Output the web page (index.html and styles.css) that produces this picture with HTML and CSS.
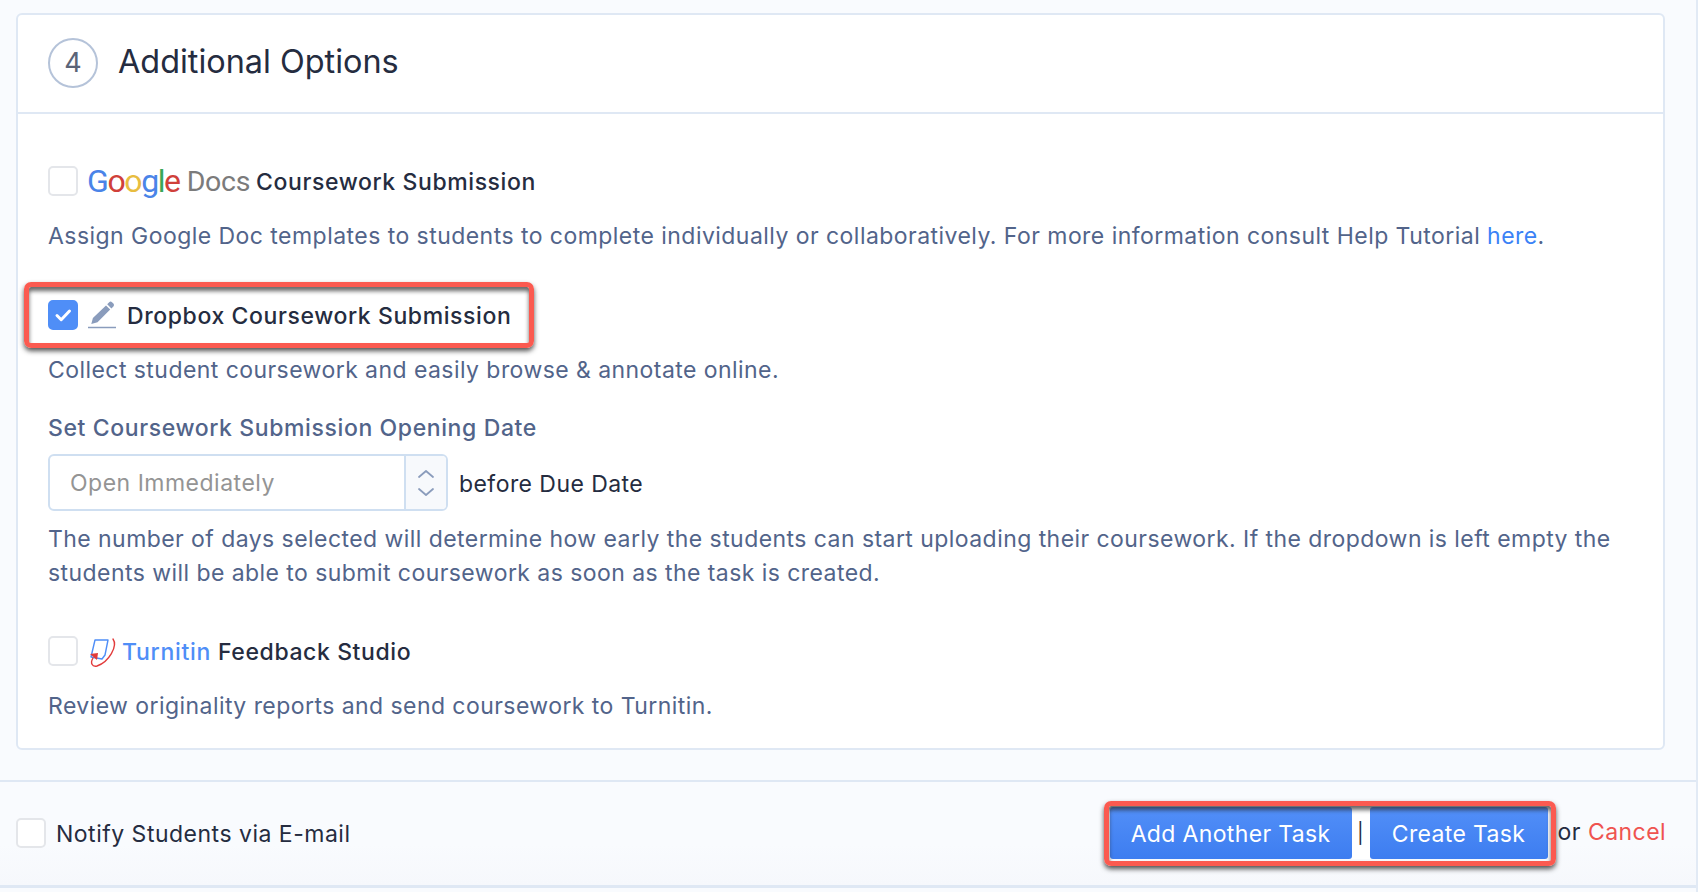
FILE: index.html
```html
<!DOCTYPE html>
<html lang="en">
<head>
<meta charset="utf-8">
<title>Additional Options</title>
<link rel="stylesheet" href="styles.css">
</head>
<body>
<main class="page">
  <section class="card">
    <header class="card-head">
      <span class="step">4</span>
      <h2 class="card-title">Additional Options</h2>
    </header>
    <div class="card-body">
      <div class="option option-google">
        <span class="check"></span>
        <span class="google"><span class="g-blue">G</span><span class="g-red">o</span><span class="g-yellow">o</span><span class="g-blue">g</span><span class="g-green">l</span><span class="g-red">e</span></span>
        <span class="docs">Docs</span>
        <span class="option-name">Coursework Submission</span>
      </div>
      <p class="desc desc-google">Assign Google Doc templates to students to complete individually or collaboratively. For more information consult Help Tutorial <a class="link">here</a>.</p>

      <div class="option option-dropbox">
        <span class="check check-on">
          <svg viewBox="0 0 30 30" width="30" height="30"><path d="M9 15.500l4.200 4.200L21.500 11" fill="none" stroke="#fff" stroke-width="3" stroke-linecap="round" stroke-linejoin="round"/></svg>
        </span>
        <svg class="pencil" viewBox="0 0 28 30" width="28" height="30"><path d="M21.200 2.200c.8-.8 2-.8 2.800 0l1.400 1.400c.8.8.8 2 0 2.800l-2 2-4.200-4.200zM18 5.400l4.200 4.200L9.500 22.300l-6.200 1.600 1.600-6z" fill="#8a9cbc"/><path d="M0 27.500h28" stroke="#8a9cbc" stroke-width="1.500"/></svg>
        <span class="option-name">Dropbox Coursework Submission</span>
      </div>
      <p class="desc desc-dropbox">Collect student coursework and easily browse &amp; annotate online.</p>
      <label class="field-label">Set Coursework Submission Opening Date</label>
      <div class="select-row">
        <div class="select">
          <span class="select-value">Open Immediately</span>
          <span class="spinner">
            <svg viewBox="0 0 18 30" width="18" height="30"><path d="M2 9l7-6 7 6M2 21l7 6 7-6" fill="none" stroke="#8a9cbc" stroke-width="1.800" stroke-linecap="round" stroke-linejoin="round"/></svg>
          </span>
        </div>
        <span class="select-after">before Due Date</span>
      </div>
      <p class="desc desc-help">The number of days selected will determine how early the students can start uploading their coursework. If the dropdown is left empty the students will be able to submit coursework as soon as the task is created.</p>

      <div class="option option-turnitin">
        <span class="check"></span>
        <svg class="turnitin-logo" viewBox="0 0 28 30" width="28" height="30"><path d="M6 4h13l-3 15-3 4-11-2z" fill="#fff" stroke="#4f8ef7" stroke-width="1.400" stroke-linejoin="round"/><path d="M24 3C29 10 20 26 8 30 3 31 1 27 4 22" fill="none" stroke="#e23b3b" stroke-width="1.400" stroke-linecap="round"/><path d="M1 18l8-1-1 7z" fill="#e23b3b"/></svg>
        <span class="turnitin-word">Turnitin</span>
        <span class="option-name">Feedback Studio</span>
      </div>
      <p class="desc desc-turnitin">Review originality reports and send coursework to Turnitin.</p>
    </div>
  </section>

  <footer class="footer">
    <div class="notify">
      <span class="check"></span>
      <span class="notify-text">Notify Students via E-mail</span>
    </div>
    <div class="actions">
      <div class="btn-group">
        <button class="btn btn-add">Add Another Task</button>
        <span class="btn-sep">|</span>
        <button class="btn btn-create">Create Task</button>
      </div>
      <span class="or">or</span>
      <a class="cancel">Cancel</a>
    </div>
  </footer>
</main>
</body>
</html>
```

FILE: styles.css
```css
*, *::before, *::after { box-sizing: border-box; }
html, body { margin: 0; height: 892px; overflow: hidden; }
body {
  background: #eef3f9;
  font-family: Inter, "Noto Sans", sans-serif;
  color: #252c40;
  font-size: 23px;
  letter-spacing: 0.44px;
}
.page {
  height: 892px;
  display: flex;
  flex-direction: column;
  padding-top: 13px;
  background: #f9fbfe;
  border-right: 2px solid #e2eaf5;
}

.card {
  margin: 0 31px 0 16px;
  height: 737px;
  background: #fff;
  border: 2px solid #dfe8f4;
  border-radius: 6px;
  flex: none;
}
.card-head {
  height: 99px;
  border-bottom: 2px solid #dfe8f4;
  display: flex;
  align-items: center;
  padding-left: 30px;
  gap: 20px;
}
.step {
  width: 50px; height: 50px;
  border: 2px solid #b5c3d9;
  border-radius: 50%;
  display: flex; align-items: center; justify-content: center;
  font-size: 27px;
  letter-spacing: 0;
  color: #5b6478;
  margin-bottom: 2px;
}
.card-title { margin: 0 0 4px; font-size: 32.4px; font-weight: 400; letter-spacing: 0; color: #252c40; }

.card-body { padding: 0 30px; }
.option { display: flex; align-items: center; height: 30px; position: relative; }
.option-google { margin-top: 52px; }
.option-name { font-weight: 500; letter-spacing: 0.6px; padding-top: 1px; }
.check {
  width: 30px; height: 30px; flex: none;
  background: #fff;
  border: 2px solid #e4e6ea;
  border-radius: 5px;
  display: block;
}
.check-on { background: #4f8ef7; border-color: #4f8ef7; }
.check-on svg { display: block; margin: -2px; }
.google { margin-left: 9px; font-family: Roboto, sans-serif; font-size: 32px; letter-spacing: -1.4px; }
.g-blue { color: #4a84e8; }
.g-red { color: #d0403a; }
.g-yellow { color: #e8bd3f; }
.g-green { color: #3aa757; }
.docs { margin-left: 7px; margin-right: 6px; font-family: Roboto, sans-serif; font-size: 28.5px; letter-spacing: -0.3px; color: #7b7b7b; }

.desc { margin: 0; color: #52648a; line-height: 34px; }
.desc-google { margin-top: 23px; letter-spacing: 0.455px; }
.link { color: #3b82f6; }

.option-dropbox { margin-top: 47px; }
.option-dropbox::after {
  content: "";
  position: absolute;
  left: -24px; top: -18px;
  width: 510px; height: 66px;
  border: 5px solid #fb5a50;
  border-radius: 7px;
  box-shadow: 0 3px 5px rgba(40,40,40,.8), inset 0 4px 4px rgba(40,40,40,.7);
}
.pencil { margin-left: 10px; margin-right: 11px; flex: none; }
.desc-dropbox { margin-top: 23px; }

.field-label { display: block; margin-top: 24px; line-height: 34px; font-weight: 500; letter-spacing: 0.61px; color: #52648a; }
.select-row { display: flex; align-items: center; margin-top: 9px; }
.select {
  width: 400px; height: 57px;
  display: flex;
  background: #fff;
  border: 2px solid #cfdff1;
  border-radius: 6px;
}
.select-value { flex: 1; padding: 1px 0 0 20px; align-self: center; color: #949494; letter-spacing: 0.5px; }
.spinner {
  width: 42px;
  border-left: 2px solid #cfdff1;
  background: #f7f9fc;
  display: flex; align-items: center; justify-content: center;
  border-radius: 0 4px 4px 0;
}
.select-after { margin-left: 11px; padding-top: 2px; color: #252c40; }
.desc-help { margin-top: 11px; }

.option-turnitin { margin-top: 46px; }
.turnitin-logo { margin-left: 11px; margin-right: 5px; flex: none; overflow: visible; }
.turnitin-word { color: #4f8ef7; font-weight: 500; margin-right: 7px; padding-top: 1px; letter-spacing: 0.7px; }
.desc-turnitin { margin-top: 23px; }

.footer {
  margin-top: 30px;
  height: 108px;
  border-top: 2px solid #dfe8f4;
  border-bottom: 3px solid #dfe8f4;
  background: linear-gradient(#f9fbfe 60%, #f6f8fc);
  display: flex;
  align-items: center;
  justify-content: space-between;
  padding: 0 30px 2px 16px;
  flex: none;
}
.notify { display: flex; align-items: center; gap: 10px; }
.notify-text { letter-spacing: 0.5px; padding-top: 2px; }
.actions { display: flex; align-items: center; }
.btn-group { display: flex; align-items: stretch; position: relative; height: 52px; background: #fff; }
.btn-group::after {
  content: "";
  position: absolute;
  left: -6px; top: -6px; right: -8px; bottom: -7px;
  border: 5px solid #fb5a50;
  border-radius: 7px;
  box-shadow: 0 3px 5px rgba(40,40,40,.8), inset 0 4px 4px rgba(40,40,40,.7);
}
.btn {
  border: 0;
  font: inherit;
  letter-spacing: 0.35px;
  color: #fff;
  background: linear-gradient(#528ff8, #3d7df0);
  border-radius: 3px;
  padding: 2px 0 0;
}
.btn-add { width: 242px; }
.btn-create { width: 178px; }
.btn-sep { width: 18px; text-align: center; line-height: 52px; font-size: 20px; }
.or { margin-left: 10px; margin-top: -2px; }
.cancel { margin-left: 7px; margin-top: -2px; color: #ef5350; }
```
